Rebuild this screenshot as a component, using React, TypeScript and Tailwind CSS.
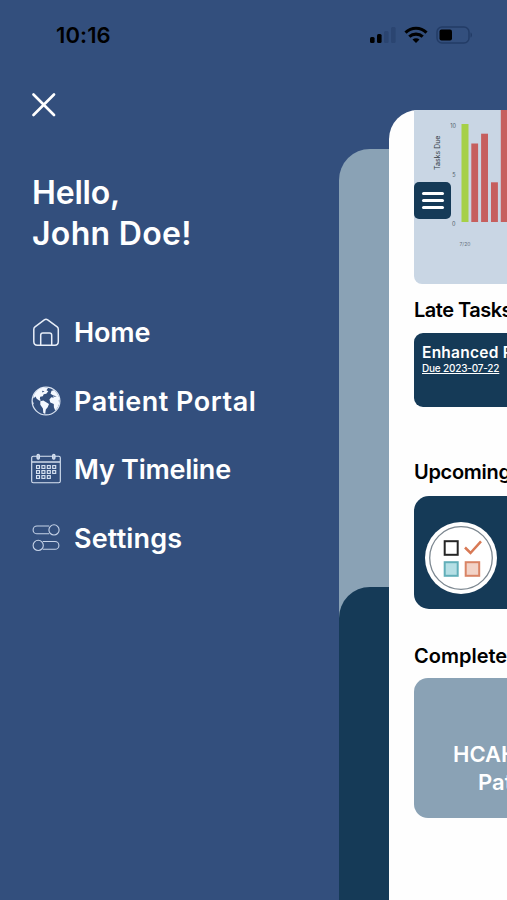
import type { ReactNode } from "react";

function StatusBar() {
  return (
    <header className="flex h-[69px] w-[507px] shrink-0 items-center justify-between pr-[34px] pl-[56px] text-black">
      <span className="text-[22px] leading-none font-semibold tracking-[0.1px]">10:16</span>
      <div className="flex items-center">
        <svg width="28" height="18" viewBox="0 0 28 18">
          <rect x="1" y="11" width="4.6" height="6" rx="1.5" />
          <rect x="8" y="8" width="4.6" height="9" rx="1.5" />
          <rect x="15" y="5" width="4.6" height="12" rx="1.5" fill="#2b4571" />
          <rect x="22" y="1" width="4.6" height="16" rx="1.5" fill="#2b4571" />
        </svg>
        <svg className="ml-[7px]" width="24" height="18" viewBox="0 0 24 18" fill="none" stroke="black" strokeWidth="3.1">
          <path d="M1.5 6.6C7.4.8 16.600.8 22.500 6.600" />
          <path d="M5.300 10.700C9 7.200 15 7.200 18.700 10.700" />
          <path d="M12 17 8.500 13.400C10.500 11.800 13.500 11.800 15.500 13.400Z" fill="black" stroke="none" />
        </svg>
        <svg className="ml-[8px]" width="37" height="18" viewBox="0 0 37 18">
          <rect x="1" y="1" width="32" height="16" rx="5" fill="none" stroke="#233c66" strokeWidth="1.500" />
          <rect x="3.500" y="3.500" width="12.500" height="11" rx="2" />
          <path d="M34.500 6.500C36.500 7 36.500 11 34.500 11.500Z" fill="#233c66" />
        </svg>
      </div>
    </header>
  );
}

function HomeIcon() {
  return (
    <svg width="30" height="30" viewBox="0 0 30 30" fill="none" stroke="#e8eef8" strokeWidth="1.500" strokeLinejoin="round">
      <path d="M2.800 12.300Q2.800 10.800 4 9.900L13.300 2.800Q15 1.600 16.700 2.800L26.200 9.900Q27.300 10.800 27.300 12.300V24.500Q27.300 28.200 23.800 28.200H6.300Q2.800 28.200 2.800 24.500Z" />
      <path d="M9.700 28V18.200Q9.700 16 11.900 16H18.500Q20.700 16 20.700 18.200V28" />
    </svg>
  );
}

function GlobeIcon() {
  return (
    <svg width="30" height="30" viewBox="0 0 30 30" fill="#f4f8ff">
      <circle cx="15" cy="15" r="13.900" fill="none" stroke="#dce5f2" strokeWidth="1.200" />
      <path d="M2.300 10.500C4 5.500 8 2.300 12.500 1.400L17 2 15.500 4.300 17.300 5.300 15.300 7.800 12.700 8.200 11.800 10.200 9.200 10.700 8.800 13 10 14.200 8.600 14.800 5.700 12.700 4.500 10.500 2.500 12.500Z" />
      <path d="M9.300 15.300 12.300 14.600 18 17.900 16.700 21.200 14.800 23.400 14.200 28 12.300 27 11.900 22.400 9.300 18.700Z" />
      <path d="M19.600 7.700 20.500 4.700 23 4.300C25.500 6.300 27.800 9.500 28.600 13.200L27.700 14.600 28.300 17.200C27.500 20 26.200 22.500 24.200 24.500L22.900 21.300 22.800 17.900 19.300 16.600 18.400 13.500 20.300 11.300 22.600 11.700 22.300 9.600Z" />
      <path d="M1.200 14.500 2.700 17.200 2 18.800Z" />
      <path d="M11 4.800 13.500 5.200 11.500 6.500ZM21.200 9.200 25.700 10.300 23.500 10.800Z" fill="#334f7d" />
    </svg>
  );
}

const dates = [
  [6, 12.600], [11.400, 12.600], [16.800, 12.600], [22.200, 12.600],
  [6, 17.600], [11.400, 17.600], [16.800, 17.600], [22.200, 17.600],
  [6, 22.600], [11.400, 22.600], [16.800, 22.600],
];

function CalendarIcon() {
  return (
    <svg width="30" height="32" viewBox="0 0 30 32" fill="none" stroke="#dbe5f4" strokeWidth="1.100">
      <rect x=".7" y="3.300" width="28.600" height="26.500" rx="1.500" />
      <path d="M1 9H29" strokeWidth="1.400" />
      <rect x="6" y="1.200" width="2.400" height="5" rx="1.200" fill="#b9c8df" />
      <rect x="21.600" y="1.200" width="2.400" height="5" rx="1.200" fill="#b9c8df" />
      {dates.map(([x, y]) => (
        <rect key={`${x}-${y}`} x={x - 0.500} y={y} width="3" height="2.800" />
      ))}
    </svg>
  );
}

function SettingsIcon() {
  return (
    <svg width="30" height="30" viewBox="0 0 30 30" fill="none" stroke="#c6d3e8" strokeWidth="1.100">
      <path d="M18.200 3H6A3.900 3.900 0 0 0 6 10.800H18.200" />
      <circle cx="23" cy="6.900" r="5.100" />
      <path d="M11.800 18.500H24A3.900 3.900 0 0 1 24 26.300H11.800" />
      <circle cx="7.200" cy="22.400" r="5.100" />
    </svg>
  );
}

function MenuItem({ icon, label, spacing }: { icon: ReactNode; label: string; spacing: string }) {
  return (
    <li className="flex h-[68.500px] items-center">
      <span className="flex w-[30px] shrink-0 justify-center">{icon}</span>
      <span className={`ml-[13px] pt-px text-[27px] leading-none font-semibold whitespace-nowrap ${spacing}`}>{label}</span>
    </li>
  );
}

function Menu() {
  return (
    <nav className="w-[339px] shrink-0 pt-[24px] pl-[31px] text-white">
      <button className="block" aria-label="Close menu">
        <svg width="26" height="24" viewBox="0 0 26 24" stroke="white" strokeWidth="2.600" strokeLinecap="round">
          <path d="M2.500 1.500 23 22M23 1.500 2.500 22" />
        </svg>
      </button>
      <h1 className="mt-[55px] ml-px text-[32px] leading-[41px] font-semibold">
        <span className="block tracking-[-0.2px]">Hello,</span>
        <span className="block tracking-[0.3px]">John Doe!</span>
      </h1>
      <ul className="mt-[44px]">
        <MenuItem icon={<HomeIcon />} label="Home" spacing="tracking-[-0.1px]" />
        <MenuItem icon={<GlobeIcon />} label="Patient Portal" spacing="tracking-[0.5px]" />
        <MenuItem icon={<CalendarIcon />} label="My Timeline" spacing="tracking-[-0.25px]" />
        <MenuItem icon={<SettingsIcon />} label="Settings" spacing="tracking-[0.15px]" />
      </ul>
    </nav>
  );
}

function TasksChart() {
  return (
    <div className="relative h-[174px] w-[200px] rounded-bl-[8px] bg-[#c9d6e4]">
      <svg className="block" width="94" height="174" viewBox="0 0 94 174" fontFamily="Inter, sans-serif">
        <text transform="translate(26 60) rotate(-90)" fontSize="7" fill="#333b45">Tasks Due</text>
        <g fontSize="5.500" fill="#505b68" textAnchor="end">
          <text x="42" y="18">10</text>
          <text x="41.500" y="67">5</text>
          <text x="41.500" y="115.500">0</text>
        </g>
        <text x="45.500" y="136" fontSize="5" fill="#66717e">7/20</text>
        <rect x="47.500" y="14" width="7" height="98" fill="#a6d047" />
        <g fill="#c65f5e">
          <rect x="57.300" y="33.500" width="6.800" height="78.500" />
          <rect x="67.100" y="23.700" width="6.900" height="88.300" />
          <rect x="77" y="72.300" width="6.900" height="39.700" />
          <rect x="86.800" y="0" width="8" height="112" />
        </g>
      </svg>
      <button className="absolute top-[72px] left-0 flex h-[37px] w-[37px] flex-col items-center justify-center gap-[4px] rounded-[5px] bg-[#153a57]" aria-label="Open menu">
        <span className="h-[3px] w-[22px] rounded-full bg-white" />
        <span className="h-[3px] w-[22px] rounded-full bg-white" />
        <span className="h-[3px] w-[22px] rounded-full bg-white" />
      </button>
    </div>
  );
}

function ChecklistBadge() {
  return (
    <svg width="72" height="72" viewBox="0 0 72 72" fill="none">
      <circle cx="36" cy="36" r="36" fill="white" />
      <circle cx="36" cy="36" r="31.300" stroke="#7c8790" strokeWidth="1.300" />
      <rect x="19.700" y="19.200" width="13" height="13.600" stroke="#252525" strokeWidth="2" />
      <path d="M40 25.500 45.500 31 56 19.300" stroke="#d87955" strokeWidth="2.500" />
      <rect x="19.700" y="40.200" width="13" height="13.600" fill="#b5dfe5" stroke="#62afb9" strokeWidth="2" />
      <rect x="40.700" y="40.200" width="13.500" height="13.600" fill="#f2d3c7" stroke="#d98465" strokeWidth="2" />
    </svg>
  );
}

function SectionTitle({ children, spacing }: { children: string; spacing: string }) {
  return <h2 className={`h-[24px] text-[20px] leading-[24px] font-semibold text-black ${spacing}`}>{children}</h2>;
}

function Dashboard() {
  return (
    <main className="mt-[41px] flex w-[118px] shrink-0 flex-col overflow-hidden rounded-tl-[29px] bg-[#fefefe] pl-[25px] whitespace-nowrap">
      <TasksChart />
      <section className="mt-[14px]">
        <SectionTitle spacing="tracking-[-0.5px]">Late Tasks</SectionTitle>
        <div className="mt-[11px] h-[74px] w-[200px] rounded-[9px] bg-[#153a57] pt-[10px] pl-2 text-white">
          <p className="text-[15.500px] leading-[19px] font-semibold tracking-[0.25px]">Enhanced Recovery</p>
          <p className="text-[10px] leading-[13px] font-medium tracking-[-0.2px] underline">Due 2023-07-22</p>
        </div>
      </section>
      <section className="mt-[53px]">
        <SectionTitle spacing="tracking-[-0.3px]">Upcoming</SectionTitle>
        <div className="mt-[12px] flex h-[113px] w-[200px] items-center rounded-[15px] bg-[#153a57] pt-[10px] pl-[11px]">
          <ChecklistBadge />
        </div>
      </section>
      <section className="mt-[35px]">
        <SectionTitle spacing="tracking-normal">Completed</SectionTitle>
        <div className="mt-[10px] h-[140px] w-[200px] rounded-[14px] bg-[#8aa2b5] pt-[62px] pl-[39px] text-[22px] leading-[28px] font-semibold text-white">
          <p>HCAHPS</p>
          <p className="pl-[25px]">Patient</p>
        </div>
      </section>
    </main>
  );
}

export default function App() {
  return (
    <div className="flex h-[900px] w-[507px] flex-col overflow-hidden bg-[#334f7d] font-['Inter',sans-serif]">
      <StatusBar />
      <div className="flex min-h-0 flex-1">
        <Menu />
        <div className="mt-[80px] flex w-[50px] shrink-0 flex-col rounded-tl-[31px] bg-[#8aa2b5]">
          <div className="mt-[438px] flex-1 rounded-tl-[31px] bg-[#153a57]" />
        </div>
        <Dashboard />
      </div>
    </div>
  );
}
